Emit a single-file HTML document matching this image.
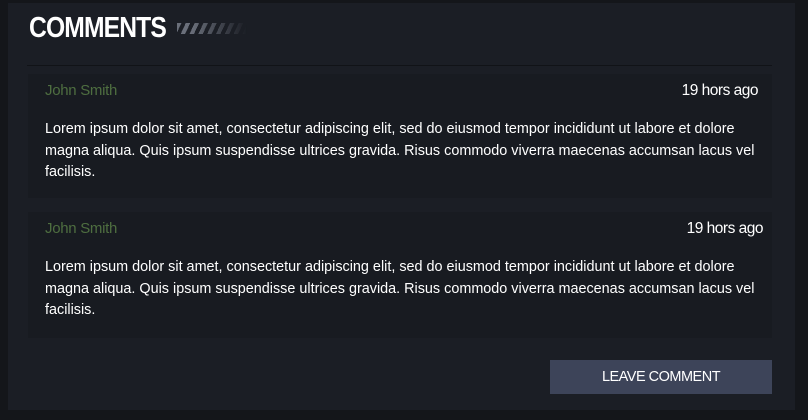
<!DOCTYPE html>
<html><head><style>
body{margin:0;width:808px;height:420px;background:#14161a;font-family:"Liberation Sans",Arial,sans-serif;overflow:hidden;position:relative}
.panel{position:absolute;left:8px;top:3px;width:787px;height:407px;background:#1b1e25}
h1{position:absolute;left:29px;top:11px;margin:0;color:#fff;font-size:29px;font-weight:bold;letter-spacing:-1px;line-height:34px;transform:scaleX(0.85);transform-origin:0 0}
.stripes{position:absolute;left:177px;top:23px;width:70px;height:11px;background:repeating-linear-gradient(115deg,#6a6f7a 0 4px,transparent 4px 8px);-webkit-mask:linear-gradient(90deg,#000 20%,transparent);mask:linear-gradient(90deg,#000 20%,transparent)}
.line{position:absolute;left:27px;top:65px;width:745px;height:1px;background:#111317}
.card{position:absolute;left:28px;width:744px;background:#181b21}
.name{position:absolute;left:17px;top:8px;color:#4e6e40;font-size:15px;letter-spacing:-0.3px}
.time{position:absolute;right:14px;top:8px;color:#fff;font-size:15.5px;letter-spacing:-0.5px}
.txt{position:absolute;left:17px;top:45px;width:712px;color:#fff;font-size:14.4px;line-height:21.5px;letter-spacing:0}
.btn{position:absolute;left:550px;top:360px;width:222px;height:34px;background:#3d4459;color:#fff;font-size:14.5px;text-align:center;line-height:35px;letter-spacing:-0.5px}
</style></head><body>
<div class="panel"></div>
<h1>COMMENTS</h1><div class="stripes"></div>
<div class="line"></div>
<div class="card" style="top:74px;height:124px"><div class="name">John Smith</div><div class="time">19 hors ago</div><div class="txt">Lorem ipsum dolor sit amet, consectetur adipiscing elit, sed do eiusmod tempor incididunt ut labore et dolore magna aliqua. Quis ipsum suspendisse ultrices gravida. Risus commodo viverra maecenas accumsan lacus vel facilisis.</div></div>
<div class="card" style="top:212px;height:126px"><div class="name">John Smith</div><div class="time" style="right:9px">19 hors ago</div><div class="txt">Lorem ipsum dolor sit amet, consectetur adipiscing elit, sed do eiusmod tempor incididunt ut labore et dolore magna aliqua. Quis ipsum suspendisse ultrices gravida. Risus commodo viverra maecenas accumsan lacus vel facilisis.</div></div>
<div class="btn">LEAVE COMMENT</div>
</body></html>
